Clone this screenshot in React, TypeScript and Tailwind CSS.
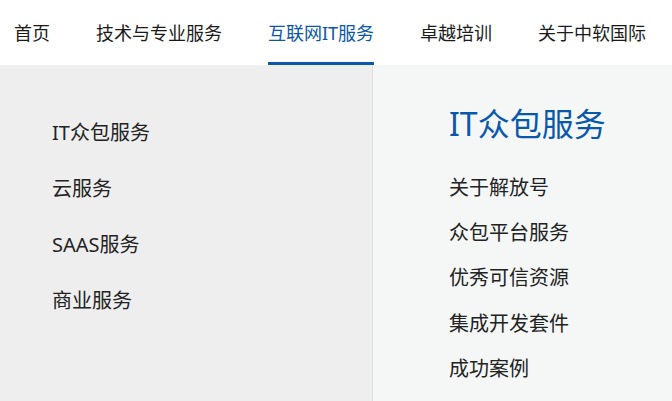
import React from "react";

const navItems = ["首页", "技术与专业服务", "互联网IT服务", "卓越培训", "关于中软国际"];
const categories = ["IT众包服务", "云服务", "SAAS服务", "商业服务"];
const links = ["关于解放号", "众包平台服务", "优秀可信资源", "集成开发套件", "成功案例"];

const font = { fontFamily: '"Noto Sans", "Noto Sans CJK SC", sans-serif' };

export default function App() {
  const active = "互联网IT服务";

  return (
    <div className="w-[672px] h-[401px] overflow-hidden bg-white" style={font}>
      {/* top navigation */}
      <nav className="flex h-[65px] gap-[46px] pl-[14px] bg-white">
        {navItems.map((item) => (
          <a
            key={item}
            className={
              item === active
                ? "flex items-center text-[18px] leading-none text-[#0a57a8] shadow-[inset_0_-3px_0_#0a58ab]"
                : "flex items-center text-[18px] leading-none text-[#1a1a1a]"
            }
          >
            {item}
          </a>
        ))}
      </nav>

      {/* dropdown panel */}
      <div className="flex h-[336px]">
        <ul className="w-[373px] shrink-0 bg-[#eeeeee] pl-[52px] pt-[40px] border-r border-[#dddddd]">
          {categories.map((c) => (
            <li key={c} className="h-[56px] flex items-center text-[20px] text-[#222222]">
              {c}
            </li>
          ))}
        </ul>
        <div className="flex-1 bg-[#f5f7f7] pl-[76px] pt-[39px]">
          <h2 className="text-[32px] leading-[40px] text-[#0a58ab]">IT众包服务</h2>
          <ul className="mt-[21px]">
            {links.map((l) => (
              <li key={l} className="h-[45.3px] flex items-center text-[20px] text-[#222222]">
                {l}
              </li>
            ))}
          </ul>
        </div>
      </div>
    </div>
  );
}
